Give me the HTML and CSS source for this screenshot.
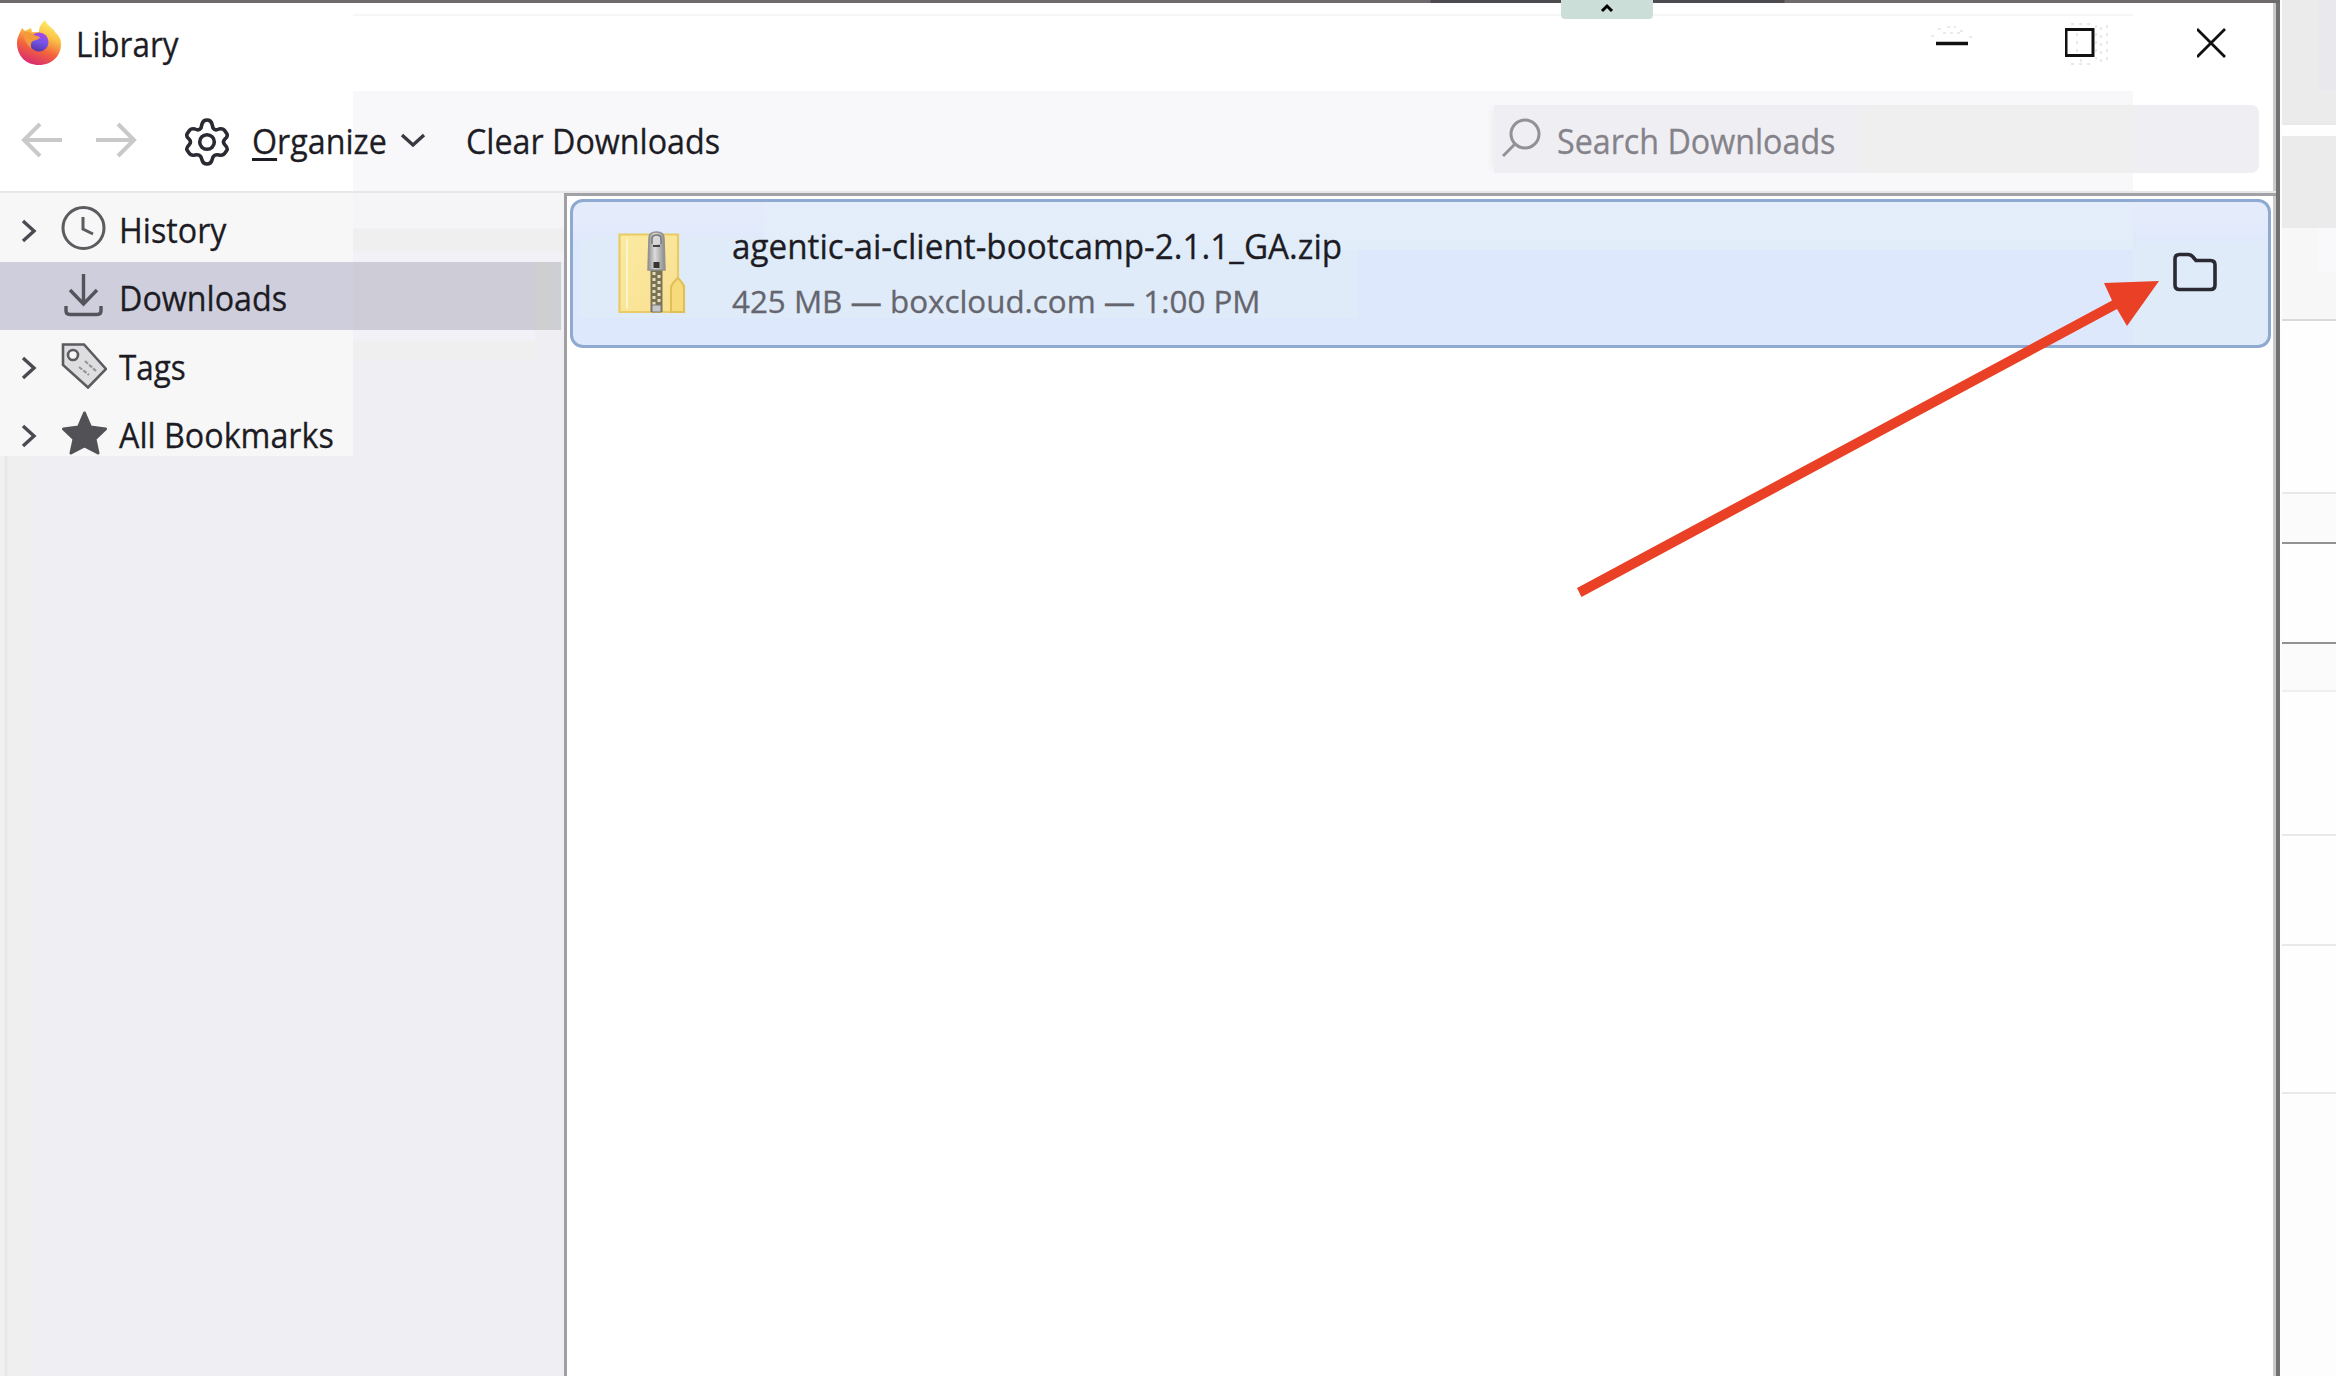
FILE: index.html
```html
<!DOCTYPE html>
<html lang="en">
<head>
<meta charset="utf-8">
<title>Library</title>
<link rel="stylesheet" href="styles.css">
</head>
<body>
<div class="screen">
  <div class="window">
    <header class="titlebar">
      <svg class="logo" width="46" height="46" viewBox="0 0 46 46">
        <defs>
          <linearGradient id="fire" x1=".75" y1="0" x2=".35" y2="1"><stop offset="0" stop-color="#fff36b"/><stop offset=".35" stop-color="#fbbf45"/><stop offset=".65" stop-color="#f3643c"/><stop offset="1" stop-color="#d92a72"/></linearGradient>
          <linearGradient id="globe" x1=".7" y1="0" x2=".4" y2="1"><stop offset="0" stop-color="#b044ea"/><stop offset=".5" stop-color="#7354e8"/><stop offset="1" stop-color="#5636a8"/></linearGradient>
        </defs>
        <path fill="url(#fire)" d="M23 45C10 45 1 36 1 23C1 17 4 13 6 8L9 11L15 8L16 12L23 12C23 6 26 3 29 0C31 5 35 7 38 10L39 12C43 16 45 19 45 24C45 36 36 45 23 45Z"/>
        <circle cx="23" cy="22" r="9.500" fill="url(#globe)"/>
        <path fill="#f59a3b" d="M7 12C12 11 15 13 18 15L24 17C23 20 19 20 17 21C14 23 15 27 15 28C10 24 8 18 7 12Z"/>
      </svg>
      <h1 class="label t-library">Library</h1>
      <div class="controls">
        <svg class="minimize" width="46" height="46" viewBox="0 0 46 46"><path d="M7 22.500H39" stroke="#111" stroke-width="3.500"/><path d="M2 15h3m4-7h3m6-2h9m4 4h4m5 6h3M14 12h17" stroke="#e4e4e4" stroke-width="1.500" stroke-dasharray="3 4"/></svg>
        <svg width="46" height="46" viewBox="0 0 46 46"><rect x="1" y="8.500" width="27" height="26" fill="none" stroke="#111" stroke-width="3"/><path d="M12 12v20M16 38v6M31 4v40M36 6v38M42 4v36M6 43h24M6 3h24" stroke="#e2e2e2" stroke-width="1.500" stroke-dasharray="3 5" fill="none"/></svg>
        <svg width="46" height="46" viewBox="0 0 46 46"><path d="M0 8L28 36M28 8L0 36" stroke="#111" stroke-width="2.800"/></svg>
      </div>
    </header>
    <nav class="toolbar">
      <svg class="nav-arrows" width="116" height="36" viewBox="0 0 116 36"><g fill="none" stroke="#c9c9c9" stroke-width="4"><path d="M2 18H41M19 2L3 18L19 34"/><path d="M75 18H114M97 2L113 18L97 34"/></g></svg>
      <svg class="gear" width="46" height="50" viewBox="0 0 46 50"><g fill="none" stroke="#2b2a33" stroke-width="3.600" stroke-linejoin="round"><path d="M18 7Q19 3 23 3Q27 3 28 7L29 11Q31 14 35 12Q39 11 41 14L43 17Q44 20 41 22Q38 25 41 28Q44 31 43 33L41 36Q39 39 35 38Q31 37 29 40L28 43Q27 47 23 47Q19 47 18 43L17 40Q15 37 11 38Q7 39 5 36L3 33Q2 31 5 28Q8 25 5 22Q2 20 3 17L5 14Q7 11 11 12Q15 14 17 11Z"/><circle cx="23" cy="25" r="7.300"/></g></svg>
      <span class="label t-organize"><u>O</u>rganize</span>
      <svg class="caret" width="26" height="16" viewBox="0 0 26 16"><path d="M2 2L13 12L24 2" fill="none" stroke="#3a3942" stroke-width="3.400"/></svg>
      <span class="label t-clear">Clear Downloads</span>
      <div class="search">
        <svg width="40" height="42" viewBox="0 0 40 42"><g fill="none" stroke="#929296" stroke-width="3"><circle cx="23" cy="17" r="14"/><path d="M13 27L1 39"/></g></svg>
        <span class="label t-search">Search Downloads</span>
      </div>
    </nav>
    <div class="content">
      <aside class="sidebar">
        <div class="row">
          <svg class="twisty" width="16" height="24" viewBox="0 0 16 24"><path d="M2 2L13 12L2 22" fill="none" stroke="#4b4a52" stroke-width="3.400"/></svg>
          <svg class="icon" width="46" height="46" viewBox="0 0 46 46"><g fill="none" stroke="#5b5b60" stroke-width="3"><circle cx="22.500" cy="23" r="20.500"/><path d="M22 12V24L32 29"/></g></svg>
          <span class="label t-history">History</span>
        </div>
        <div class="row selected">
          <span class="twisty"></span>
          <svg class="icon" width="46" height="46" viewBox="0 0 46 46"><g fill="none" stroke="#55545d" stroke-width="3.400"><path d="M22.500 1V31M9 17L22.500 31L36 17"/><path d="M5 33V38Q5 41.500 9 41.500H36Q40 41.500 40 38V33"/></g></svg>
          <span class="label t-down">Downloads</span>
        </div>
        <div class="row">
          <svg class="twisty" width="16" height="24" viewBox="0 0 16 24"><path d="M2 2L13 12L2 22" fill="none" stroke="#4b4a52" stroke-width="3.400"/></svg>
          <svg class="icon low" width="46" height="46" viewBox="0 0 46 46"><path d="M2 1.500H23L45 26L27 44.500L2 22Z" fill="#dedee0" stroke="#5b5b60" stroke-width="2.600"/><circle cx="12" cy="12" r="5" fill="#f7f7f7" stroke="#5b5b60" stroke-width="2.600"/><path d="M24 18L35 28M18 24L28 32" stroke="#96969a" stroke-width="2.200" stroke-dasharray="4 1.500"/></svg>
          <span class="label t-tags">Tags</span>
        </div>
        <div class="row">
          <svg class="twisty" width="16" height="24" viewBox="0 0 16 24"><path d="M2 2L13 12L2 22" fill="none" stroke="#4b4a52" stroke-width="3.400"/></svg>
          <svg class="icon low" width="46" height="46" viewBox="0 0 46 46"><path d="M23.500 2L29.500 16L44.500 18L34 28L37 42L23.500 35L10 42L13 28L2.500 18L17.500 16Z" fill="#515156" stroke="#515156" stroke-width="3" stroke-linejoin="round"/></svg>
          <span class="label t-books">All Bookmarks</span>
        </div>
      </aside>
      <main class="downloads">
        <article class="item">
          <svg class="zip" width="68" height="84" viewBox="0 0 68 84">
            <defs><linearGradient id="paper" x1="0" y1="0" x2="1" y2="1"><stop offset="0" stop-color="#fbeaa2"/><stop offset="1" stop-color="#f9df90"/></linearGradient><linearGradient id="metal"><stop offset="0" stop-color="#8d8d8d"/><stop offset=".4" stop-color="#dcdcdc"/><stop offset="1" stop-color="#8a8a8a"/></linearGradient></defs>
            <path d="M1.500 4.500H60V50L66 56V82H1.500Z" fill="url(#paper)" stroke="#e8cb62" stroke-width="2.200"/>
            <path d="M9 9V78" stroke="#fdf5cc" stroke-width="2"/>
            <path d="M53 82V58Q53 54 60 48Q66 54 66 58V82Z" fill="#f6da7c" stroke="#e0c055" stroke-width="2"/>
            <rect x="32.500" y="40" width="12" height="42" fill="#7a7257"/>
            <path d="M36 42V76M41 45V76" stroke="#e6dfba" stroke-width="3" stroke-dasharray="3 3"/>
            <rect x="34" y="75" width="9" height="7" fill="#c7c7c7" stroke="#777"/>
            <path d="M31 8Q31 2 38.500 2Q46 2 46 8L47 40H30Z" fill="url(#metal)" stroke="#929292" stroke-width="1.500"/>
            <path d="M34 14V9Q34 5 38.500 5Q43 5 43 9V14" fill="#d8d8d8" stroke="#777" stroke-width="1.500"/>
            <path d="M35 16H42" stroke="#444" stroke-width="2"/><rect x="35.500" y="32" width="6" height="6" fill="#37352e"/>
          </svg>
          <div class="details">
            <span class="label t-name">agentic-ai-client-bootcamp-2.1.1_GA.zip</span>
            <span class="label t-meta">425 MB — boxcloud.com — 1:00 PM</span>
          </div>
          <svg class="folder" width="44" height="40" viewBox="0 0 44 40"><path d="M2 7Q2 2.500 6.500 2.500H15Q18 2.500 20 5L23 8.500H37.500Q42 8.500 42 13V33Q42 37.500 37.500 37.500H6.500Q2 37.500 2 33Z" fill="none" stroke="#2b2a33" stroke-width="3.600"/></svg>
        </article>
      </main>
    </div>
  </div>
  <aside class="behind">
    <div class="b b1"></div><div class="b b2"></div><div class="b b3"></div><div class="b b4"></div>
    <div class="b b5"></div><div class="b b6"></div><div class="b b7"></div><div class="b b8"></div>
    <div class="b b9"></div><div class="b b10"></div><div class="b b11"></div>
  </aside>
  <div class="topline"></div>
  <div class="pull-tab"><svg width="14" height="10" viewBox="0 0 14 10"><path d="M2 8L7 3L12 8" fill="none" stroke="#000" stroke-width="3"/></svg></div>
  <svg class="pointer" width="590" height="320" viewBox="0 0 590 320"><path d="M2 308L537 20.500L529 3L584 1L552 46L542 29L6.500 317Z" fill="#ea4126"/></svg>
</div>
</body>
</html>
```
FILE: styles.css
```css
* { box-sizing: border-box; }
body { margin: 0; background: #fff; overflow: hidden; }
svg { display: block; flex: none; }
.screen {
  position: relative;
  display: flex;
  width: 2336px;
  height: 1376px;
  font-family: "Open Sans", "Noto Sans", sans-serif;
  font-size: 34px;
  color: #1d1c24;
}
.window {
  display: flex;
  flex-direction: column;
  width: 2280px;
  border-right: 4px solid #727272;
  box-shadow: inset -3px 0 #c9c9c9;
}
.label {
  display: block;
  flex: none;
  margin: 0;
  font-size: 34px;
  font-weight: 400;
  line-height: 46px;
  white-space: nowrap;
  transform: scaleX(.948);
  transform-origin: 0 50%;
  -webkit-text-stroke: .3px currentColor;
}
.titlebar {
  display: flex;
  align-items: flex-start;
  height: 91px;
  padding: 20px 33px 0 16px;
  background: linear-gradient(#f6f6f6, #f6f6f6) 353px 14px / 1780px 2px no-repeat;
}
.titlebar .label { margin: 1px 0 0 14px; transform: scaleX(.925); }
.controls { display: flex; margin-left: auto; gap: 86px; }
.controls svg { margin-top: 1px; }
.controls .minimize { margin-right: 4px; }
.toolbar {
  display: flex;
  align-items: center;
  height: 102px;
  padding: 0 17px 3px 21px;
  border-bottom: 2px solid #e7e7e9;
  background: linear-gradient(#f8f8fb, #f8f8fb) 353px 0 / 1780px 100px no-repeat;
}
.gear { margin: 4px 0 0 47px; }
.t-organize { width: 135px; margin: 3px 0 0 22px; }
.t-organize u { text-decoration-thickness: 3px; text-underline-offset: 4px; }
.caret { margin: 2px 0 0 13px; }
.t-clear { margin: 3px 0 0 40px; }
.search {
  display: flex;
  align-items: center;
  flex: none;
  width: 765px;
  height: 68px;
  margin: 0 0 1px auto;
  padding-left: 8px;
  border-radius: 0 8px 8px 0;
  background: linear-gradient(#efefef, #efefef) 365px 0 / 274px 68px no-repeat #efeef3;
  box-shadow: -6px 0 6px -4px #ececec;
  color: #84838a;
}
.search svg { margin-top: -2px; }
.t-search { margin: 4px 0 0 15px; }
.content { display: flex; flex: 1; }
.sidebar {
  width: 567px;
  border-right: 3px solid #a0a0a2;
  background:
    linear-gradient(#cfcedc, #cfcedc) 0 69px / 353px 68px no-repeat,
    linear-gradient(#f7f7f7, #f7f7f7) 0 0 / 353px 263px no-repeat,
    linear-gradient(90deg, #cecdd7 182px, #cfcfcf 183px 195px, #cdcfd5 196px) 353px 69px / 208px 68px no-repeat,
    linear-gradient(#f5f5f7 35px, #efefef 36px 58px, #f2f1f8 59px) 353px 0 / 211px 69px no-repeat,
    linear-gradient(#f2f1f8 10px, #efefef 11px) 353px 137px / 182px 30px no-repeat,
    linear-gradient(90deg, #f1f1f2 4px, #e8e8ea 5px 7px, #efefef 8px 34px, #efeef3 35px) 0 0 / 36px 100% no-repeat,
    #efeef3;
}
.row { display: flex; align-items: center; height: 68.5px; padding-left: 21px; }
.row:first-child { height: 69px; }
.twisty { width: 16px; margin-top: 6px; }
.icon { margin: 0 0 0 24px; }
.icon.low { margin-top: 2px; }
.row .label { margin: 4px 0 0 12px; }
.row .t-tags { transform: scaleX(.925); }
.downloads {
  flex: 1;
  padding: 3px 0 0 3px;
  border-top: 3px solid #a0a2a5;
}
.item {
  display: flex;
  align-items: center;
  width: 1701px;
  height: 149px;
  padding: 0 51px 0 45px;
  border: 3px solid #8faad1;
  border-radius: 13px;
  background:
    linear-gradient(#e4eefa, #e2edfa) 194px 3px / 1369px 48px no-repeat border-box,
    linear-gradient(#dfebf9, #dfebf9) 10px 38px / 778px 81px no-repeat border-box,
    linear-gradient(#dfebf8, #dfebf8) 1563px 43px / 134px 103px no-repeat border-box,
    linear-gradient(#e4ecfb 20px, #dee8fc 50px) border-box;
}
.zip { margin-bottom: 3px; }
.details { display: flex; flex-direction: column; margin: 0 0 0 46px; }
.t-name { transform: scaleX(.978); }
.t-meta { margin-top: 9px; font-size: 31px; color: #65656e; transform: scaleX(1.011); }
.folder { margin: 0 0 3px auto; }
.behind { display: flex; flex: 1; flex-direction: column; padding-left: 2px; background: #fdfdfd; }
.b { border-bottom: 2px solid #e9e9e9; background: #fefefe; }
.b1 { height: 125px; background: linear-gradient(#e8e8ed, #e8e8ed) 36px 0 / 20px 90px no-repeat #ebebeb; }
.b2 { height: 11px; border: 0; }
.b3 { height: 92px; background: #ebebeb; border: 0; }
.b4 { height: 93px; background: linear-gradient(#f9f9fc, #f9f9fc) 36px 0 / 20px 44px no-repeat #f7f7f7; border-color: #dadada; }
.b5 { height: 173px; }
.b6 { height: 50px; background: #fbfbfb; border-color: #929292; }
.b7 { height: 100px; border-color: #929292; }
.b8 { height: 48px; background: #fbfbfb; border-color: #eee; }
.b9 { height: 144px; }
.b10 { height: 110px; }
.b11 { height: 148px; }
.topline { position: absolute; left: 0; top: 0; width: 2280px; height: 3px; background: linear-gradient(90deg, #6e6a6c 1430px, #4e4b50 1431px 1784px, #6e6a6c 1785px); }
.pull-tab { position: absolute; left: 1561px; top: 0; display: flex; justify-content: center; width: 92px; height: 19px; padding-top: 3px; border-radius: 0 0 4px 4px; background: #cbdfd8; }
.pointer { position: absolute; left: 1575px; top: 280px; }
```
